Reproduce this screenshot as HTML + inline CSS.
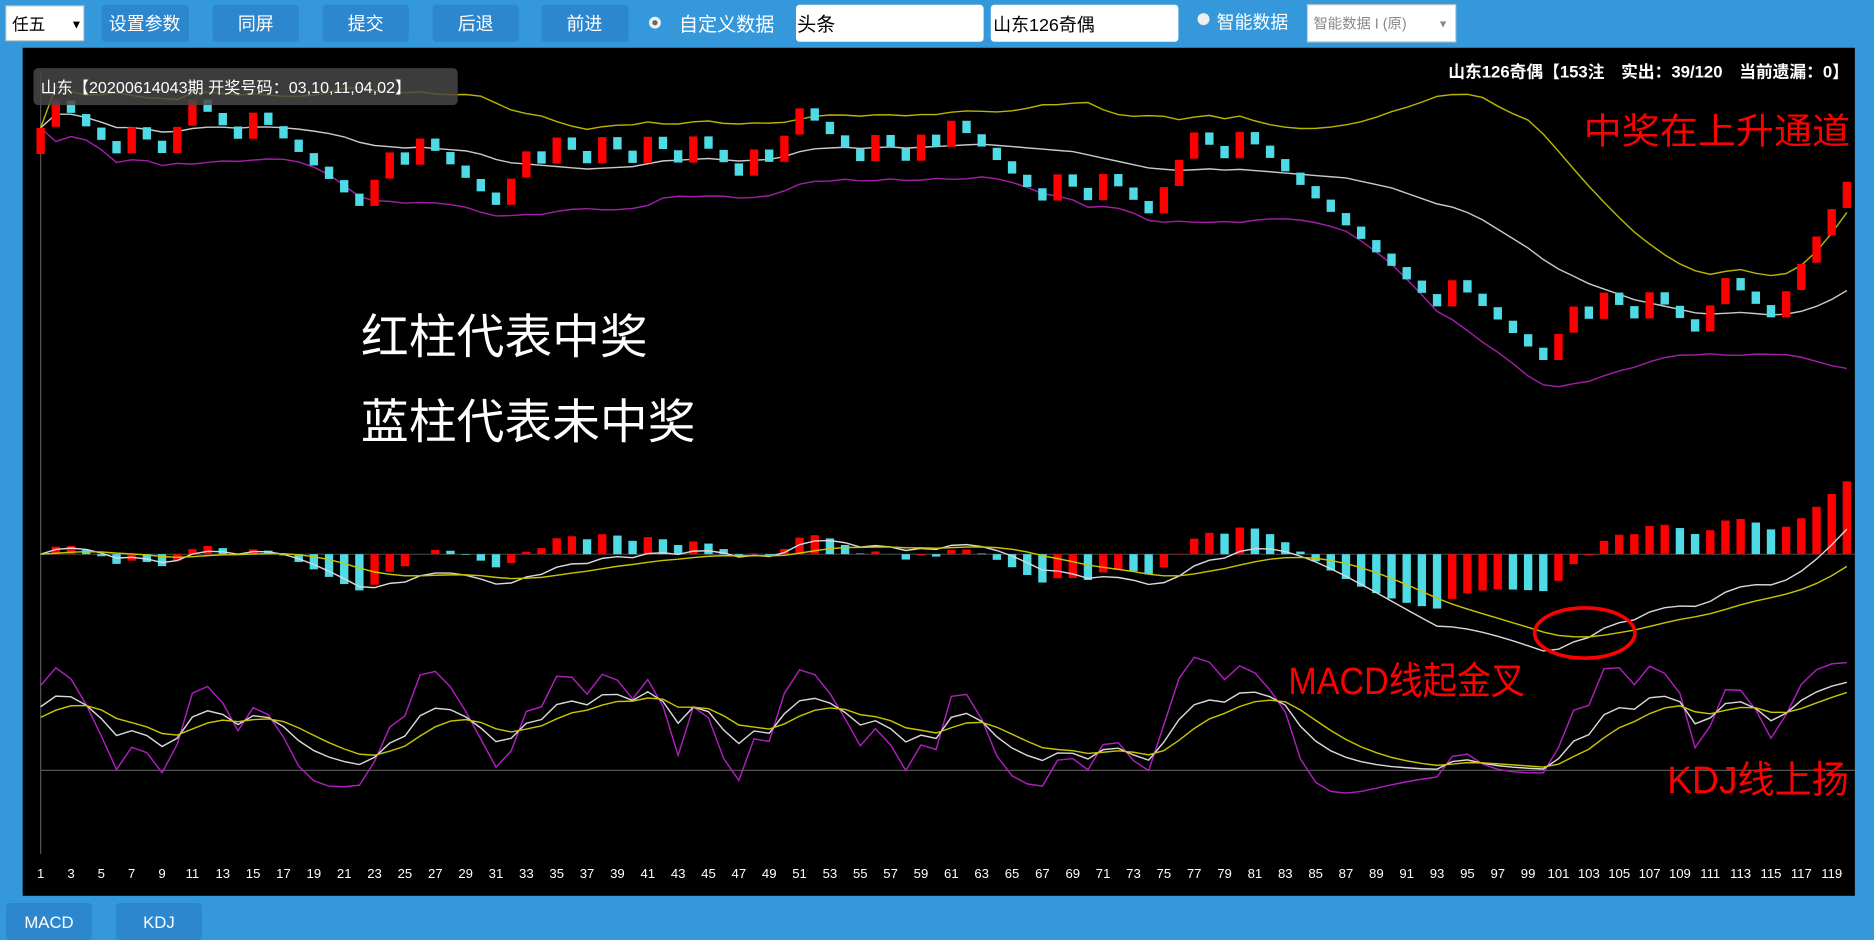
<!DOCTYPE html>
<html><head><meta charset="utf-8">
<style>
html,body{margin:0;padding:0;background:#3598db;width:1874px;height:940px;overflow:hidden}
svg{display:block}
text{font-family:"Liberation Sans","Noto Sans CJK SC",sans-serif}
</style></head>
<body>
<svg id="s" width="1874" height="940" viewBox="0 0 1568 787" preserveAspectRatio="none" xmlns="http://www.w3.org/2000/svg">
<rect x="0" y="0" width="1568" height="787" fill="#3598db"/>
<rect x="5" y="5" width="65" height="29" fill="#fff" stroke="#ccc"/>
<text x="10" y="25" font-size="14" fill="#000">任五</text>
<text x="59" y="24" font-size="10" fill="#000">▼</text>
<g fill="#2c87cf">
<rect x="85" y="4" width="73" height="31" rx="3"/>
<rect x="178" y="4" width="72" height="31" rx="3"/>
<rect x="270" y="4" width="72" height="31" rx="3"/>
<rect x="362" y="4" width="72" height="31" rx="3"/>
<rect x="453" y="4" width="73" height="31" rx="3"/>
</g>
<g fill="#fff" font-size="15" text-anchor="middle">
<text x="121" y="25">设置参数</text>
<text x="214" y="25">同屏</text>
<text x="306" y="25">提交</text>
<text x="398" y="25">后退</text>
<text x="489" y="25">前进</text>
</g>
<circle cx="548" cy="19" r="5" fill="#eee"/><circle cx="548" cy="19" r="2.2" fill="#666"/>
<text x="568" y="26" font-size="16" fill="#fff">自定义数据</text>
<rect x="666" y="4" width="157" height="31" rx="3" fill="#fff"/>
<text x="667" y="26" font-size="16" fill="#000">头条</text>
<rect x="829" y="4" width="157" height="31" rx="3" fill="#fff"/>
<text x="831" y="26" font-size="15" fill="#000">山东126奇偶</text>
<circle cx="1007" cy="16" r="5" fill="#eee"/>
<text x="1018" y="24" font-size="15" fill="#fff">智能数据</text>
<rect x="1094" y="4" width="124" height="31" fill="#fff" stroke="#ccc"/>
<text x="1099" y="24" font-size="12" fill="#888">智能数据 I (原)</text>
<text x="1203" y="23" font-size="9" fill="#888">▼</text>
<rect x="19" y="40" width="1533" height="710" fill="#000"/>
<line x1="34" y1="60" x2="34" y2="715" stroke="#555" stroke-width="1"/>
<line x1="34" y1="645" x2="1552" y2="645" stroke="#555" stroke-width="1"/>
<g id="g"></g>
<rect x="28" y="57" width="355" height="31" rx="4" fill="rgba(70,70,70,0.85)"/>
<text x="34" y="78" font-size="13.5" fill="#fff">山东【20200614043期 开奖号码：03,10,11,04,02】</text>
<text x="1547" y="65" font-size="14" font-weight="bold" fill="#fff" text-anchor="end">山东126奇偶【153注　实出：39/120　当前遗漏：0】</text>
<text x="1325" y="120" font-size="30" fill="#f00" textLength="223" lengthAdjust="spacingAndGlyphs">中奖在上升通道</text>
<text x="302" y="296" font-size="40" fill="#fff">红柱代表中奖</text>
<text x="302" y="367" font-size="40" fill="#fff">蓝柱代表未中奖</text>
<text x="1078" y="581" font-size="32" fill="#f00" textLength="198" lengthAdjust="spacingAndGlyphs">MACD线起金叉</text>
<ellipse cx="1326" cy="530" rx="42" ry="21" fill="none" stroke="#f00" stroke-width="3"/>
<text x="1395" y="664" font-size="32" fill="#f00" textLength="152" lengthAdjust="spacingAndGlyphs">KDJ线上扬</text>
<g id="lbl" fill="#fff" font-size="11" text-anchor="middle"></g>
<rect x="5" y="756" width="72" height="31" rx="3" fill="#2c87cf"/>
<rect x="97" y="756" width="72" height="31" rx="3" fill="#2c87cf"/>
<text x="41" y="777" font-size="14" fill="#fff" text-anchor="middle">MACD</text>
<text x="133" y="777" font-size="14" fill="#fff" text-anchor="middle">KDJ</text>
</svg>
<script>
(function(){
var seq="RRCCCCRCCRRCCCRCCCCCCCRRCRCCCCCRRCRCCRCC"+"RCCRCCCRCRRCCCCRCCRCRCCCCCCRCCRCCCRRRCCR"+"CCCCCCCCCCCCCRCCCCCCRRCRCCRCCCRRCCCRRRRR";
var r=22.9,c=11.3,L=130,n=seq.length;
var X=function(i){return 34+i*12.7;};
var top=[],bot=[],cl=[];
for(var i=0;i<n;i++){
 if(seq[i]=='R'){top.push(L-r);bot.push(L);L=L-r;}else{top.push(L);bot.push(L+c);L=L+c;}
 cl.push(L);
}
var h='';
function poly(pts,col,w){return '<polyline fill="none" stroke="'+col+'" stroke-width="'+(w||1.2)+'" points="'+pts.join(' ')+'"/>';}
var up=[],md=[],lo=[];
for(i=0;i<n;i++){var s=Math.max(0,i-19),sum=0,k=0;for(var j=s;j<=i;j++){sum+=cl[j];k++;}var m=sum/k,v=0;for(j=s;j<=i;j++)v+=(cl[j]-m)*(cl[j]-m);var sd=Math.sqrt(v/k);
 md.push(X(i).toFixed(1)+','+m.toFixed(1));up.push(X(i).toFixed(1)+','+(m-2*sd).toFixed(1));lo.push(X(i).toFixed(1)+','+(m+2*sd).toFixed(1));}
h+=poly(up,'#b8b400')+poly(md,'#c8c8c8')+poly(lo,'#a21ea8');
for(i=0;i<n;i++){h+='<rect x="'+(X(i)-3.5).toFixed(1)+'" y="'+top[i].toFixed(1)+'" width="7" height="'+(bot[i]-top[i]-1).toFixed(1)+'" fill="'+(seq[i]=='R'?'#ff0000':'#4fdbe6')+'"/>';}
var p=cl.map(function(y){return -y;});
var e12=p[0],e26=p[0],dea=0,D=[],E=[],H=[];
for(i=0;i<n;i++){e12=e12*11/13+p[i]*2/13;e26=e26*25/27+p[i]*2/27;var dif=e12-e26;dea=dea*0.8+dif*0.2;D.push(dif);E.push(dea);H.push(2*(dif-dea));}
var mn=Math.max.apply(null,D.map(Math.abs)),mh=Math.max.apply(null,H.map(Math.abs));
var sD=81/mn,sH=61/mh,z=464;
h+='<line x1="34" y1="'+z+'" x2="1552" y2="'+z+'" stroke="#555" stroke-width="0.8"/>';
for(i=0;i<n;i++){var v2=H[i]*sH,col=(i==0||H[i]>=H[i-1])?'#ff0000':'#4fdbe6';
 h+='<rect x="'+(X(i)-3.5).toFixed(1)+'" y="'+(v2>0?z-v2:z).toFixed(1)+'" width="7" height="'+Math.abs(v2).toFixed(1)+'" fill="'+col+'"/>';}
var pd=[],pe=[];for(i=0;i<n;i++){pd.push(X(i).toFixed(1)+','+(z-D[i]*sD).toFixed(1));pe.push(X(i).toFixed(1)+','+(z-E[i]*sD).toFixed(1));}
h+=poly(pd,'#d8d8d8')+poly(pe,'#c8c400');
var K=50,Dk=50,pk=[],pdk=[],pj=[];
for(i=0;i<n;i++){var s2=Math.max(0,i-8),hh=-1e9,ll=1e9;for(j=s2;j<=i;j++){hh=Math.max(hh,-top[j]);ll=Math.min(ll,-bot[j]);}
 var rsv=hh==ll?50:(p[i]-ll)/(hh-ll)*100;K=K*2/3+rsv/3;Dk=Dk*2/3+K/3;var J=3*K-2*Dk;
 pk.push(X(i).toFixed(1)+','+(645-K*0.8).toFixed(1));pdk.push(X(i).toFixed(1)+','+(645-Dk*0.8).toFixed(1));pj.push(X(i).toFixed(1)+','+(645-J*0.8).toFixed(1));}
h+=poly(pj,'#b01ec0')+poly(pk,'#d8d8d8')+poly(pdk,'#c8c400');
document.getElementById('g').innerHTML=h;
var l='';for(i=0;i<n;i+=2){l+='<text x="'+X(i).toFixed(1)+'" y="735">'+(i+1)+'</text>';}
document.getElementById('lbl').innerHTML=l;
})();
</script>
</body></html>
